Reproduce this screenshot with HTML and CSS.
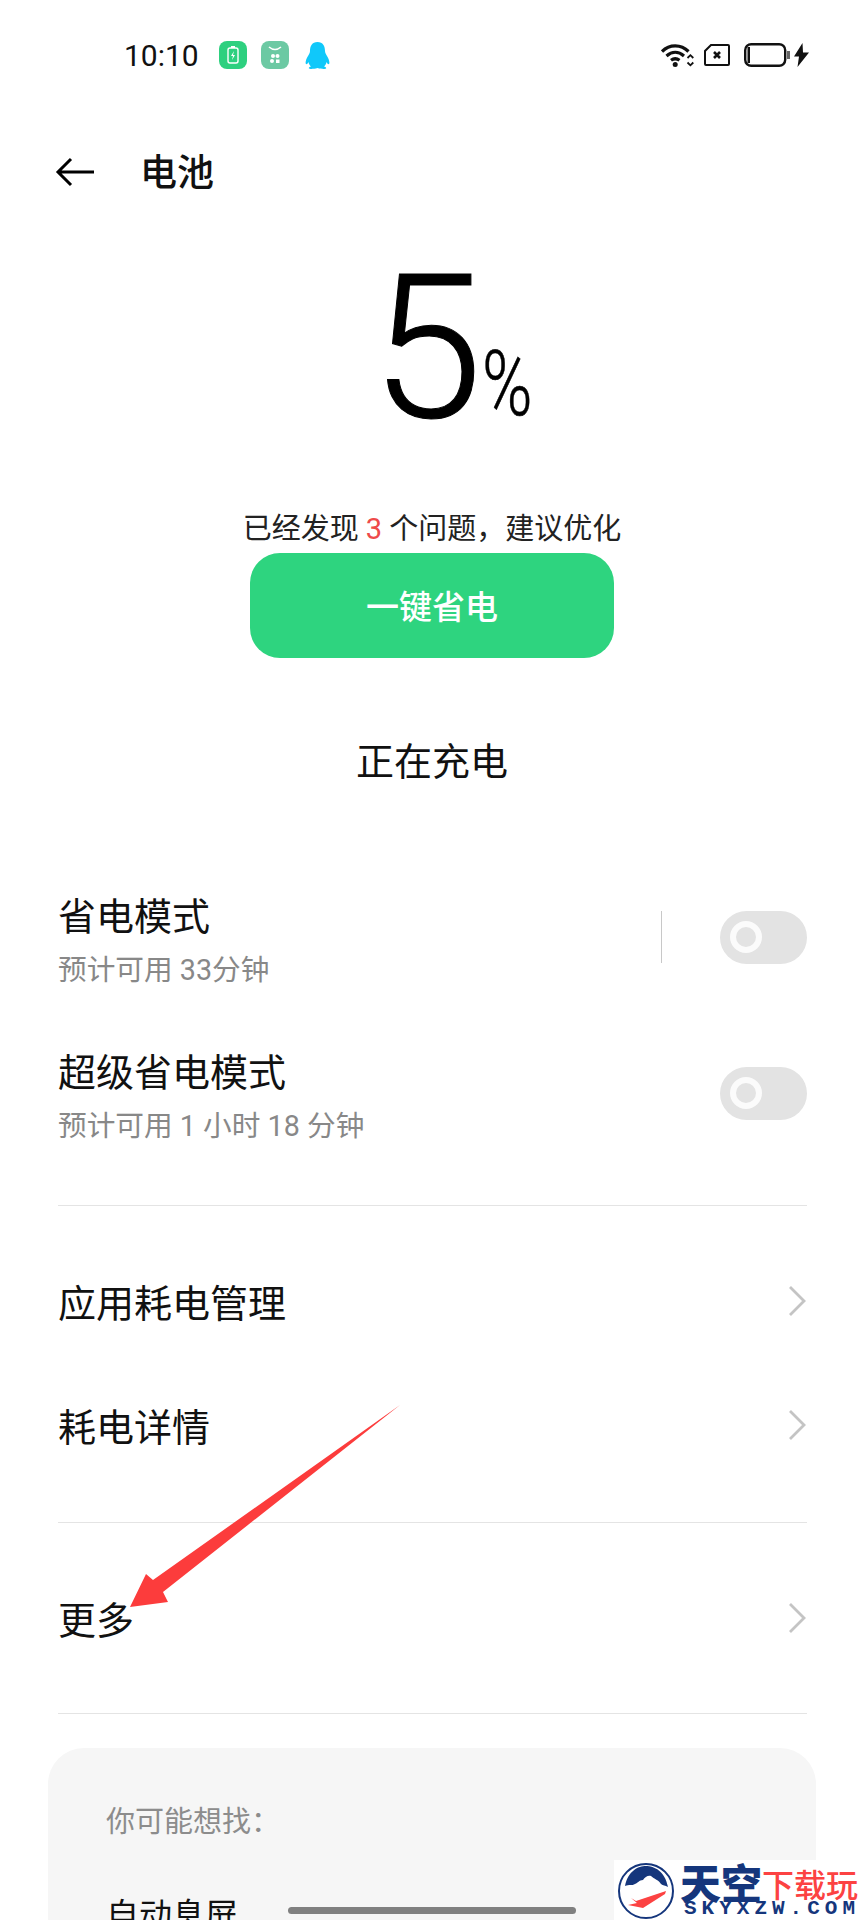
FILE: index.html
```html
<!DOCTYPE html>
<html lang="zh-CN">
<head>
  <meta charset="UTF-8">
  <meta name="viewport" content="width=device-width, initial-scale=1.0">
  <title>电池</title>
  <link rel="stylesheet" href="styles.css">
</head>
<body>
  <div class="screen">
    <!-- Barra di stato -->
    <div class="status-bar">
      <span class="clock">10:10</span>
      <svg class="app-icon" viewBox="0 0 28 28">
        <rect width="28" height="28" rx="8" fill="#2ed07f"/>
        <rect x="9" y="7" width="10" height="15" rx="2" fill="none" stroke="#fff" stroke-width="1.4"/>
        <rect x="12" y="5" width="4" height="2" fill="#fff"/>
        <path d="M15 10l-3 5h2l-1 4 3-5h-2z" fill="#fff"/>
      </svg>
      <svg class="app-icon" viewBox="0 0 28 28">
        <rect width="28" height="28" rx="8" fill="#6cc9a3"/>
        <path d="M8 6q6 5 12 0" fill="none" stroke="#fff" stroke-width="1.6"/>
        <circle cx="12" cy="15" r="2" fill="#fff"/><circle cx="16.500" cy="15" r="2" fill="#fff"/>
        <circle cx="11" cy="20" r="2" fill="#fff"/><rect x="15" y="18.500" width="3.500" height="3.500" fill="#fff"/>
      </svg>
      <svg class="qq-icon" viewBox="0 0 25 27">
        <path d="M12.500 0C7 0 5 4 5 9c0 2-1 3-2 5-2 3-3 7-2 8 1 .6 2-1 2.500-2 .3 2 1.500 3.500 2.500 4.500-2 .6-2.500 1.500-2 2 .8.7 5 .5 8.500-.5 3.500 1 7.700 1.200 8.500.5.500-.5 0-1.400-2-2 1-1 2.200-2.500 2.500-4.500.5 1 1.500 2.600 2.500 2 1-1 0-5-2-8-1-2-2-3-2-5 0-5-2-9-7.500-9z" fill="#10c8fa"/>
      </svg>
      <span class="status-right">
        <svg class="wifi" viewBox="0 0 33 24">
          <path d="M1 8.500C8.500 1 20 1 27.500 8.500" fill="none" stroke="#111" stroke-width="3.200"/>
          <path d="M5.500 13c5.500-4.800 12-4.800 17.500 0" fill="none" stroke="#111" stroke-width="3.200"/>
          <path d="M10 17.300c3-2.200 5.500-2.200 8.500 0" fill="none" stroke="#111" stroke-width="3.200"/>
          <circle cx="14.200" cy="21.500" r="2.500" fill="#111"/>
          <path d="M26.500 15l2.900-2.800 2.900 2.800M26.500 19.500l2.900 2.800 2.900-2.800" fill="none" stroke="#111" stroke-width="1.800"/>
        </svg>
        <svg class="sim" viewBox="0 0 26 22">
          <path d="M7 1h17a1 1 0 0 1 1 1v18a1 1 0 0 1-1 1H2a1 1 0 0 1-1-1V7z" fill="none" stroke="#111" stroke-width="2"/>
          <path d="M10 8l6 6M16 8l-6 6" stroke="#111" stroke-width="2.600"/>
        </svg>
        <svg class="batt" viewBox="0 0 46 24">
          <rect x="1.200" y="1.200" width="40" height="21.600" rx="6" fill="none" stroke="#111" stroke-width="2.400"/>
          <rect x="3.500" y="4" width="2.500" height="16" fill="#111"/>
          <rect x="43" y="8" width="3" height="8" fill="#666"/>
        </svg>
        <svg class="bolt" viewBox="0 0 15 24">
          <path d="M8.500 0L0 13.500h5L3.500 24 15 9.500H9z" fill="#111"/>
        </svg>
      </span>
    </div>

    <!-- Titolo -->
    <div class="toolbar">
      <svg class="back" viewBox="0 0 40 30">
        <path d="M39 15H3M16 2L3 15l13 13" fill="none" stroke="#000" stroke-width="3"/>
      </svg>
      <span class="page-title">电池</span>
    </div>

    <div class="level">
      <span class="level-num">5</span><span class="level-pct">%</span>
    </div>
    <div class="hint">已经发现 <span class="hint-count">3</span> 个问题，建议优化</div>
    <div class="save-btn">一键省电</div>
    <div class="charging">正在充电</div>

    <div class="group modes">
      <div class="row mode-row">
        <div>
          <div class="row-title">省电模式</div>
          <div class="row-sub">预计可用 33分钟</div>
        </div>
        <span class="row-sep"></span>
        <span class="toggle"><span class="knob"></span></span>
      </div>
      <div class="row mode-row">
        <div>
          <div class="row-title">超级省电模式</div>
          <div class="row-sub">预计可用 1 小时 18 分钟</div>
        </div>
        <span class="toggle"><span class="knob"></span></span>
      </div>
    </div>

    <div class="group links">
      <div class="row link-row">
        <span class="row-title">应用耗电管理</span>
        <svg class="chevron" viewBox="0 0 18 32"><path d="M2 2l14 14L2 30" fill="none" stroke="#c4c4c4" stroke-width="2.800"/></svg>
      </div>
      <div class="row link-row">
        <span class="row-title">耗电详情</span>
        <svg class="chevron" viewBox="0 0 18 32"><path d="M2 2l14 14L2 30" fill="none" stroke="#c4c4c4" stroke-width="2.800"/></svg>
      </div>
    </div>

    <div class="group more">
      <div class="row link-row">
        <span class="row-title">更多</span>
        <svg class="chevron" viewBox="0 0 18 32"><path d="M2 2l14 14L2 30" fill="none" stroke="#c4c4c4" stroke-width="2.800"/></svg>
      </div>
    </div>

    <div class="suggest">
      <div class="suggest-head">你可能想找：</div>
      <div class="suggest-item">自动息屏</div>
    </div>

    <!-- Sovrapposizioni -->
    <svg class="arrow" viewBox="0 0 864 1920">
      <path d="M400 1405L163 1592l5 10-38 5 16-33 7 6z" fill="#fc3c3c"/>
    </svg>
    <div class="home-bar"></div>
    <div class="watermark">
      <svg class="wm-logo" viewBox="0 0 56 56">
        <ellipse cx="28" cy="28" rx="27" ry="27" fill="#fff" stroke="#15367c" stroke-width="2"/>
        <path d="M7 23C10 8 20 3 28 3s19 5 22 21c-3-2-5-1-7-3-2-4-7-5-10-8-3-1-6 1-8 4-4 0-5 3-8 4-3 2-6 0-10 2z" fill="#15367c"/>
        <path d="M13 35l5 3 30-10-1 3-22 14-15-3 9-2z" fill="#fc4242"/>
      </svg>
      <div class="wm-text">
        <div class="wm-top"><span class="wm-big">天空</span><span class="wm-red">下载玩</span></div>
        <div class="wm-url">SKYXZW.COM</div>
      </div>
    </div>
  </div>
</body>
</html>
```

FILE: styles.css
```css
/* Generale */
body {
  margin: 0;
  background: #fff;
  font-family: Roboto, "Noto Sans CJK SC", sans-serif;
  color: #000;
}

.screen {
  position: relative;
  width: 864px;
  height: 1920px;
  overflow: hidden;
  background: #fff;
}

/* Barra di stato */
.status-bar {
  height: 110px;
  display: flex;
  align-items: center;
  padding: 0 55px 0 124px;
  box-sizing: border-box;
}

.clock {
  font-size: 30px;
  color: #111;
  width: 95px;
}

.app-icon {
  width: 28px;
  height: 28px;
  margin-right: 14px;
}

.qq-icon {
  width: 25px;
  height: 27px;
  margin-left: 2px;
}

.status-right {
  margin-left: auto;
  display: flex;
  align-items: center;
}

.wifi { width: 33px; height: 24px; margin-right: 10px; }
.sim { width: 26px; height: 22px; margin-right: 14px; }
.batt { width: 46px; height: 24px; margin-right: 4px; }
.bolt { width: 15px; height: 24px; }

/* Titolo */
.toolbar {
  height: 124px;
  display: flex;
  align-items: center;
  padding-left: 55px;
}

.back {
  width: 40px;
  height: 30px;
  margin-right: 45px;
}

.page-title {
  font-size: 37px;
  line-height: 50px;
  font-weight: 500;
  color: #111;
  padding-top: 3px;
}

/* Percentuale */
.level {
  height: 270px;
  display: flex;
  align-items: baseline;
  justify-content: center;
  padding-left: 56px;
  color: #000;
}

.level-num {
  font-size: 201px;
  font-weight: 300;
  line-height: 230px;
  -webkit-text-stroke: 1px #000;
}

.level-pct {
  font-size: 90px;
  font-weight: 300;
  display: inline-block;
  transform: translateY(-2px) scaleX(0.76);
  transform-origin: left center;
  -webkit-text-stroke: 0.5px #000;
}

.hint {
  height: 44px;
  line-height: 50px;
  text-align: center;
  font-size: 29px;
  color: #222;
}

.hint-count {
  color: #ee4a4a;
}

.save-btn {
  width: 364px;
  height: 105px;
  margin: 5px auto 0;
  background: #2ed47f;
  border-radius: 30px;
  color: #fff;
  font-size: 33px;
  font-weight: 500;
  text-align: center;
  line-height: 109px;
}

.charging {
  height: 201px;
  line-height: 208px;
  text-align: center;
  font-size: 38px;
  color: #111;
}

/* Righe */
.group {
  margin: 0 57px 0 58px;
  border-bottom: 1px solid #e4e4e4;
}

.row {
  display: flex;
  align-items: center;
}

.row-title {
  font-size: 38px;
  line-height: 49px;
  padding-top: 7px;
  color: #111;
}

.row-sub {
  margin-top: 3px;
  padding-top: 7px;
  font-size: 28.700px;
  line-height: 37px;
  color: #888;
}

.modes {
  height: 347px;
  box-sizing: border-box;
}

.mode-row {
  height: 156px;
}

.mode-row .toggle {
  margin-left: auto;
}

.row-sep {
  margin-left: auto;
  width: 1px;
  height: 52px;
  background: #c8c8c8;
}

.row-sep + .toggle {
  margin-left: 58px;
}

.toggle {
  width: 87px;
  height: 53px;
  border-radius: 27px;
  background: #e3e3e3;
  display: flex;
  align-items: center;
  padding-left: 10px;
  box-sizing: border-box;
}

.knob {
  width: 20px;
  height: 20px;
  border-radius: 50%;
  border: 6px solid #fbfbfb;
  background: #e3e3e3;
}

.link-row {
  justify-content: space-between;
  height: 124px;
}

.chevron {
  width: 18px;
  height: 32px;
  margin-right: 1px;
}

.links {
  padding: 33px 0 35px;
}

.more {
  padding: 33px 0;
}

/* Scheda suggerimenti */
.suggest {
  margin: 34px 48px 0;
  height: 400px;
  padding: 50px 58px;
  box-sizing: border-box;
  background: #f6f6f6;
  border-radius: 36px;
}

.suggest-head {
  font-size: 29px;
  line-height: 48px;
  height: 44px;
  color: #8c8c8c;
}

.suggest-item {
  margin-top: 49px;
  font-size: 33px;
  line-height: 50px;
  color: #111;
}

/* Sovrapposizioni */
.arrow {
  position: absolute;
  top: 0;
  left: 0;
  width: 864px;
  height: 1920px;
}

.home-bar {
  position: absolute;
  left: 288px;
  top: 1907px;
  width: 288px;
  height: 7px;
  border-radius: 4px;
  background: #808080;
}

.watermark {
  position: absolute;
  left: 614px;
  top: 1860px;
  width: 250px;
  height: 60px;
  background: #fff;
  display: flex;
  padding: 3px 0 0 4px;
  box-sizing: border-box;
}

.wm-logo {
  width: 56px;
  height: 56px;
  margin-right: 6px;
}

.wm-top {
  display: flex;
  align-items: flex-end;
  height: 37px;
}

.wm-big {
  font-family: "Noto Sans CJK SC", sans-serif;
  font-size: 41px;
  line-height: 37px;
  font-weight: 900;
  color: #15367c;
}

.wm-red {
  font-family: "Noto Sans CJK SC", sans-serif;
  font-size: 32px;
  line-height: 34px;
  font-weight: 500;
  color: #fc4242;
}

.wm-url {
  font-family: "Liberation Mono", monospace;
  font-size: 21px;
  line-height: 18px;
  font-weight: 700;
  letter-spacing: 5px;
  color: #15367c;
  padding-left: 4px;
  white-space: nowrap;
}
```
